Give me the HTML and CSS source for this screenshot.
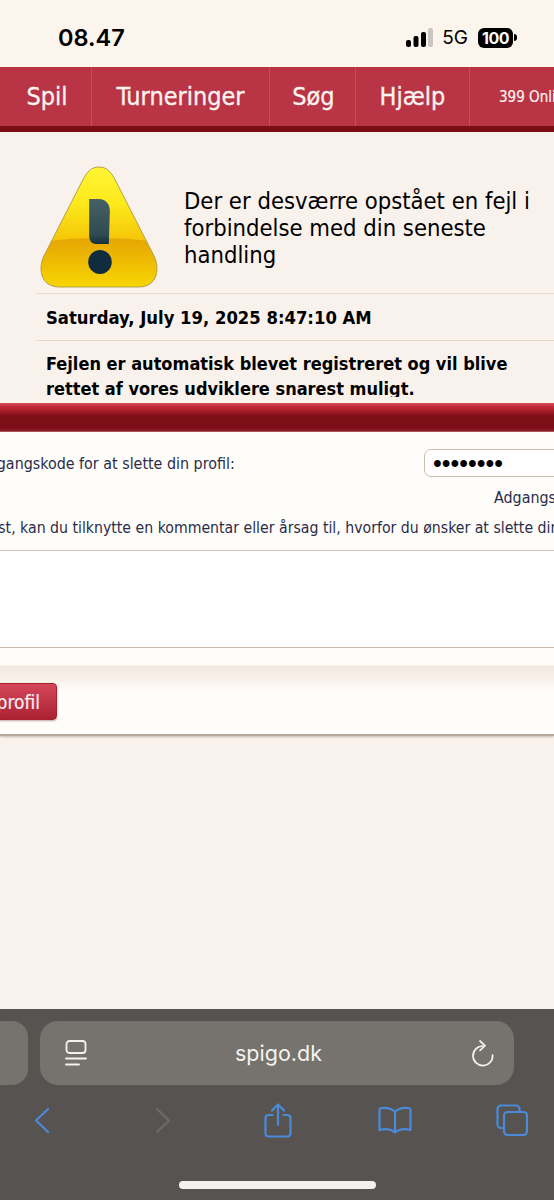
FILE: index.html
```html
<!DOCTYPE html>
<html lang="da">

<head>
    <meta charset="UTF-8">
    <meta name="viewport" content="width=device-width, initial-scale=1.0">
    <title>Spigo</title>
    <link rel="stylesheet" href="styles.css">
</head>

<body>
    <div class="page">
        <div class="statusbar">
            <span class="clock">08.47</span>
            <div class="status-icons">
                <svg class="signal" width="27" height="19" viewBox="0 0 27 19">
                    <rect x="0" y="12" width="5" height="7" rx="2" fill="#000"/>
                    <rect x="7.5" y="8" width="5" height="11" rx="2" fill="#000"/>
                    <rect x="15" y="4" width="5" height="15" rx="2" fill="#000"/>
                    <rect x="22" y="0" width="5" height="19" rx="2" fill="#c9c5bf"/>
                </svg>
                <span class="network">5G</span>
                <div class="battery-wrap">
                    <div class="battery"><span class="battery-level">100</span></div>
                    <div class="battery-nub"></div>
                </div>
            </div>
        </div>

        <div class="nav">
            <a class="nav-item nav-spil">Spil</a>
            <a class="nav-item nav-turn">Turneringer</a>
            <a class="nav-item nav-soeg">Søg</a>
            <a class="nav-item nav-hjaelp">Hjælp</a>
            <span class="online">399 Online</span>
        </div>

        <div class="error-panel">
            <div class="error-head">
                <svg class="warning" width="118" height="124" viewBox="0 0 120 124" preserveAspectRatio="none">
                    <defs>
                        <linearGradient id="warnTop" x1="0" y1="0" x2="0" y2="1">
                            <stop offset="0" stop-color="#fff533"/>
                            <stop offset="0.3" stop-color="#fde91c"/>
                            <stop offset="0.6" stop-color="#f5c708"/>
                        </linearGradient>
                        <linearGradient id="warnLow" x1="0" y1="0" x2="0" y2="1">
                            <stop offset="0" stop-color="#e5a403"/>
                            <stop offset="1" stop-color="#f8d902"/>
                        </linearGradient>
                        <linearGradient id="warnBar" x1="0" y1="0" x2="0" y2="1">
                            <stop offset="0" stop-color="#476266"/>
                            <stop offset="0.8" stop-color="#2f4a50"/>
                            <stop offset="1" stop-color="#12303c"/>
                        </linearGradient>
                        <clipPath id="warnShape">
                            <path d="M60 1 C68 1 72 6 76 13 L116 90 C122 102 120 121 100 121 L20 121 C0 121 -2 102 4 90 L44 13 C48 6 52 1 60 1 Z"/>
                        </clipPath>
                    </defs>
                    <path d="M60 1 C68 1 72 6 76 13 L116 90 C122 102 120 121 100 121 L20 121 C0 121 -2 102 4 90 L44 13 C48 6 52 1 60 1 Z" fill="url(#warnTop)"/>
                    <path d="M0 76 Q60 68 120 76 V124 H0 Z" fill="url(#warnLow)" clip-path="url(#warnShape)"/>
                    <path d="M60 1 C68 1 72 6 76 13 L116 90 C122 102 120 121 100 121 L20 121 C0 121 -2 102 4 90 L44 13 C48 6 52 1 60 1 Z" fill="none" stroke="#b0a24a" stroke-width="1"/>
                    <path d="M50 33 L60 33 C67 33 71 38 71 45 L70 78 L57 78 C53 78 50 75 50 70 Z" fill="url(#warnBar)"/>
                    <circle cx="61" cy="96" r="12" fill="#102c3e"/>
                </svg>
                <h2 class="error-title">Der er desværre opstået en fejl i forbindelse med din seneste handling</h2>
            </div>
            <div class="error-date">Saturday, July 19, 2025 8:47:10 AM</div>
            <div class="error-text">Fejlen er automatisk blevet registreret og vil blive rettet af vores udviklere snarest muligt.</div>
        </div>

        <div class="band"></div>

        <div class="form-box">
            <div class="form-row">
                <span class="form-label">Indtast din adgangskode for at slette din profil:</span>
                <input class="password" type="password" value="12345678">
            </div>
            <div class="form-hint">Adgangskode</div>
            <div class="form-note">Hvis du har lyst, kan du tilknytte en kommentar eller årsag til, hvorfor du ønsker at slette din profil:</div>
            <div class="comment"></div>
            <div class="form-gap"></div>
            <div class="button-row">
                <button class="delete-btn">Slet profil</button>
            </div>
        </div>

        <div class="filler"></div>

        <div class="safari">
            <div class="url-row">
                <div class="prev-tab"></div>
                <div class="url-pill">
                    <svg width="22" height="26" viewBox="0 0 22 26" fill="none" stroke="#f4f2ef" stroke-width="1.8" stroke-linecap="round">
                        <rect x="1.5" y="1" width="19" height="12" rx="3"/>
                        <path d="M1 18.5 H21"/>
                        <path d="M1 24.5 H14"/>
                    </svg>
                    <span class="url-text">spigo.dk</span>
                    <svg width="22" height="27" viewBox="0 0 22 27" fill="none" stroke="#f4f2ef" stroke-width="1.7" stroke-linecap="round" stroke-linejoin="round">
                        <path d="M11 6 A9.8 9.8 0 1 0 20.6 15"/>
                        <path d="M8 1 L13 5.6 L8 10.5"/>
                    </svg>
                </div>
            </div>
            <div class="toolbar">
                <svg class="tool-back" width="16" height="27" viewBox="0 0 16 27" fill="none" stroke="#4a8ad8" stroke-width="2.2" stroke-linecap="round" stroke-linejoin="round">
                    <path d="M14 2 L2 13.5 L14 25"/>
                </svg>
                <svg class="tool-next" width="16" height="27" viewBox="0 0 16 27" fill="none" stroke="#6e6a66" stroke-width="2.2" stroke-linecap="round" stroke-linejoin="round">
                    <path d="M2 2 L14 13.5 L2 25"/>
                </svg>
                <svg class="tool-share" width="28" height="35" viewBox="0 0 28 35" fill="none" stroke="#4a8ad8" stroke-width="2.2" stroke-linecap="round" stroke-linejoin="round">
                    <path d="M8.5 12 H4.5 A3 3 0 0 0 1.5 15 V30.5 A3 3 0 0 0 4.5 33.5 H23.5 A3 3 0 0 0 26.5 30.5 V15 A3 3 0 0 0 23.5 12 H19.5"/>
                    <path d="M14 22 V2"/>
                    <path d="M8 7.5 L14 1.5 L20 7.5"/>
                </svg>
                <svg class="tool-book" width="34" height="28" viewBox="0 0 34 28" fill="none" stroke="#4a8ad8" stroke-width="2.2" stroke-linecap="round" stroke-linejoin="round">
                    <path d="M17 6 C14 2.5 9 1.5 3.5 2 A2 2 0 0 0 1.5 4 V24 C7 22.5 13 23 17 26.5 C21 23 27 22.5 32.5 24 V4 A2 2 0 0 0 30.5 2 C25 1.5 20 2.5 17 6 Z"/>
                    <path d="M17 6 V26"/>
                </svg>
                <svg class="tool-tabs" width="32" height="32" viewBox="0 0 32 32" fill="none" stroke="#4a8ad8" stroke-width="2.2" stroke-linejoin="round">
                    <path d="M8 24 H5 A3.5 3.5 0 0 1 1.5 20.5 V5 A3.5 3.5 0 0 1 5 1.5 H20 A3.5 3.5 0 0 1 23.5 5 V8"/>
                    <rect x="8" y="8" width="23" height="23" rx="3.5"/>
                </svg>
            </div>
            <div class="home-bar"></div>
        </div>
    </div>
</body>

</html>
```

FILE: styles.css
```css
* {
    box-sizing: border-box;
}

html,
body {
    margin: 0;
    padding: 0;
}

body {
    font-family: "DejaVu Sans", Verdana, sans-serif;
    font-stretch: condensed;
    background-color: #f9f2ec;
}

.page {
    display: flex;
    flex-direction: column;
    width: 554px;
    height: 1200px;
    overflow: hidden;
}

/* barra do iphone */
.statusbar {
    display: flex;
    align-items: center;
    justify-content: space-between;
    height: 67px;
    padding: 8px 37px 0 58px;
    background-color: #fcf5ee;
    font-stretch: normal;
}

.clock {
    font-family: Inter, sans-serif;
    font-size: 23.5px;
    font-weight: 600;
    color: #000;
}

.status-icons {
    display: flex;
    align-items: center;
    gap: 10px;
}

.signal {
    margin-right: -1px;
}

.network {
    font-family: Inter, sans-serif;
    font-size: 19px;
    color: #000;
}

.battery-wrap {
    display: flex;
    align-items: center;
    gap: 1px;
}

.battery {
    display: flex;
    align-items: center;
    justify-content: center;
    width: 35px;
    height: 20px;
    border-radius: 6px;
    background-color: #000;
}

.battery-nub {
    width: 3px;
    height: 7px;
    border-radius: 0 3px 3px 0;
    background-color: #000;
}

.battery-level {
    font-family: Inter, sans-serif;
    font-size: 16px;
    font-weight: 700;
    letter-spacing: -0.5px;
    color: #fff;
}

/* menu */
.nav {
    display: flex;
    align-items: center;
    height: 65px;
    background-color: #b93444;
    border-bottom: 6px solid #7d0d15;
    white-space: nowrap;
    overflow: hidden;
}

.nav-item {
    display: flex;
    align-items: center;
    justify-content: center;
    flex-shrink: 0;
    height: 100%;
    font-size: 25px;
    -webkit-text-stroke: 0.3px #fdf3f0;
    color: #fdf3f0;
    border-right: 1px solid #c54e5c;
}

.nav-spil {
    width: 92px;
    padding-left: 3px;
}

.nav-turn {
    width: 178px;
}

.nav-soeg {
    width: 86px;
    padding-left: 2px;
}

.nav-hjaelp {
    width: 114px;
}

.online {
    flex-shrink: 0;
    margin-left: 29px;
    font-size: 15px;
    -webkit-text-stroke: 0.2px #fdf3f0;
    color: #fdf3f0;
}

/* caixa de erro */
.error-panel {
    height: 271px;
    padding-left: 36px;
    overflow: hidden;
    background-color: #f9f2ec;
    color: #000;
}

.error-head {
    display: flex;
    align-items: center;
    gap: 26px;
    height: 162px;
    padding-left: 4px;
    padding-top: 32px;
    padding-bottom: 1px;
    border-bottom: 1px solid #e8d9c8;
}

.warning {
    flex-shrink: 0;
}

.error-title {
    flex: 1;
    margin: 0;
    padding-right: 16px;
    font-size: 23.6px;
    font-weight: normal;
    line-height: 27px;
}

.error-date {
    height: 47px;
    padding: 13px 0 0 10px;
    font-size: 18.3px;
    font-weight: bold;
    border-bottom: 1px solid #e8d9c8;
}

.error-text {
    height: 56px;
    padding: 10px 30px 0 10px;
    overflow: hidden;
    font-size: 18px;
    font-weight: bold;
    line-height: 25px;
}

.band {
    height: 29px;
    background: linear-gradient(to bottom, #d85060 0, #c42c3a 3px, #a81c2a 8px, #7c0e18 13px, #7c0e18 25px, #8e1c26 28px, #c8868a 29px);
}

/* formulario */
.form-box {
    background-color: #fffdf9;
    border-bottom: 2px solid #b7a89c;
    color: #2a2c4a;
    font-size: 15.9px;
    box-shadow: 0 1px 2px rgba(120, 100, 80, 0.4);
}

.form-row {
    display: flex;
    align-items: center;
    height: 44px;
    margin-top: 9px;
    margin-left: -102px;
    white-space: nowrap;
}

.form-label {
    width: 526px;
    flex-shrink: 0;
}

.password {
    width: 160px;
    height: 28px;
    flex-shrink: 0;
    padding: 0 8px;
    border: 1px solid #c9bfae;
    border-radius: 7px;
    background-color: #fff;
    font-size: 25px;
    color: #000;
}

.form-hint {
    height: 30px;
    padding-left: 494px;
    line-height: 26px;
    white-space: nowrap;
    overflow: hidden;
}

.form-note {
    width: 900px;
    height: 35px;
    margin-left: -99px;
    font-size: 15.7px;
    white-space: nowrap;
    line-height: 26px;
}

.comment {
    height: 98px;
    background-color: #fff;
    border-top: 1px solid #cfc4ba;
    border-bottom: 1px solid #c9bcb0;
}

.form-gap {
    height: 18px;
    border-bottom: 1px solid #f7f1ea;
}

.button-row {
    height: 68px;
    padding-top: 17px;
    background: linear-gradient(to bottom, #f3e9e1 0, #f7f0e9 12px, #fffdf9 26px);
}

.delete-btn {
    display: block;
    width: 108px;
    height: 37px;
    margin-left: -51px;
    padding: 0 16px 0 0;
    border: 1px solid #a9202f;
    border-radius: 4px;
    background: linear-gradient(to bottom, #d5475b, #ab2233);
    box-shadow: 0 1px 2px rgba(90, 40, 40, 0.4);
    font-family: "DejaVu Sans", Verdana, sans-serif;
    font-stretch: condensed;
    font-size: 19px;
    -webkit-text-stroke: 0.2px #fbeeee;
    color: #fbeeee;
    text-align: right;
    white-space: nowrap;
}

.filler {
    flex: 1;
}

/* barra do safari */
.safari {
    position: relative;
    display: flex;
    flex-direction: column;
    height: 191px;
    background-color: #575350;
    font-stretch: normal;
}

.url-row {
    display: flex;
    gap: 12px;
    height: 64px;
    margin-top: 12px;
    margin-left: -100px;
}

.prev-tab {
    width: 128px;
    border-radius: 16px;
    background-color: #76726e;
}

.url-pill {
    display: flex;
    align-items: center;
    justify-content: space-between;
    width: 474px;
    padding: 0 20px 0 25px;
    border-radius: 18px;
    background-color: #76726e;
}

.url-text {
    font-family: Inter, sans-serif;
    font-size: 21.5px;
    color: #f4f2ef;
    margin-left: -2px;
}

.toolbar {
    display: flex;
    align-items: center;
    height: 38px;
    margin-top: 16px;
    padding-left: 34px;
}

.tool-next {
    margin-left: 105px;
}

.tool-share {
    margin-left: 93px;
}

.tool-book {
    margin-left: 86px;
}

.tool-tabs {
    margin-left: 84px;
}

.home-bar {
    position: absolute;
    left: 179px;
    bottom: 11px;
    width: 197px;
    height: 8px;
    border-radius: 4px;
    background-color: #f2f1ef;
}
```
